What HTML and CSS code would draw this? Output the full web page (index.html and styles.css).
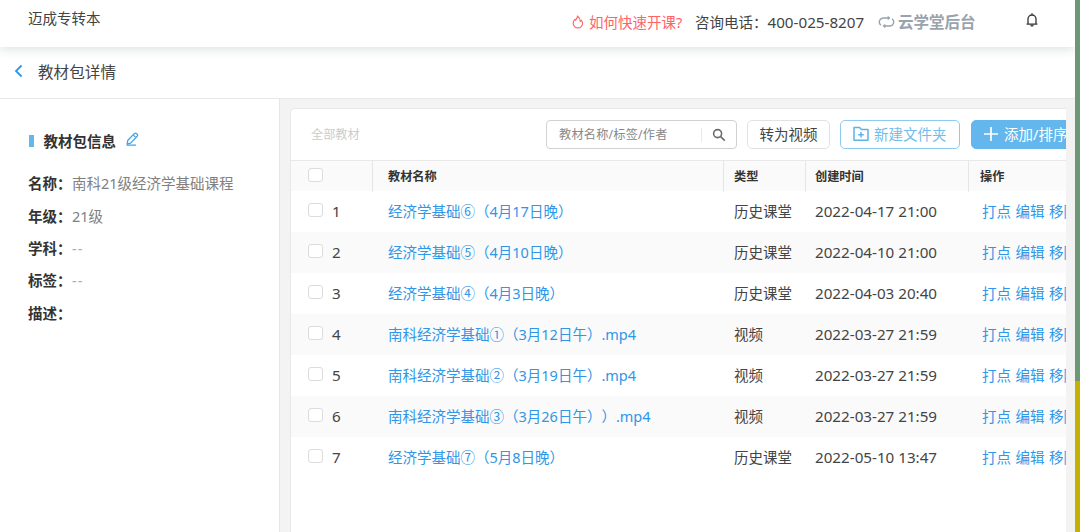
FILE: index.html
```html
<!DOCTYPE html>
<html lang="zh-CN">
<head>
<meta charset="utf-8">
<title>教材包详情</title>
<link rel="stylesheet" href="styles.css">
</head>
<body>
<div class="screen">
  <div class="app">
    <header class="topbar">
      <span class="brand">迈成专转本</span>
      <span class="help">
        <svg class="flame" width="12" height="14" viewBox="0 0 12 14" fill="none" stroke="#ff6464" stroke-width="1.1" stroke-linejoin="round"><path d="M5.4 1C5.6 3.2 4.4 4 3.6 5.2 3.3 4.8 3.2 4.6 3.1 4.2 1.8 5.4 1.2 6.8 1.2 8.2a4.7 4.7 0 0 0 9.4 0C10.6 6.800 9.800 5.800 9.200 5.200 9 5.900 8.700 6.200 8.200 6.500 8.100 4.200 7.200 2.200 5.400 1z"/></svg>
        <span>如何快速开课?</span>
      </span>
      <span class="phone">咨询电话：<span class="num">400-025-8207</span></span>
      <span class="backend">
        <svg width="17" height="14" viewBox="0 0 17 14" fill="none" stroke="#98a3ae" stroke-width="1.4" stroke-linecap="round"><path d="M2.500 9.800A4 4 0 0 1 5 3H10.500M14.500 4.200A4 4 0 0 1 12 11H6.500"/><path d="M9.700 .8L12.500 3 9.700 5.200zM7.300 8.800L4.500 11 7.300 13.200z" fill="#98a3ae" stroke="none"/></svg>
        <span>云学堂后台</span>
      </span>
      <svg class="bell" width="12" height="14" viewBox="0 0 12 14" fill="none" stroke="#333" stroke-width="1.3" stroke-linejoin="round"><path d="M6 .2V2M2 11V6a4 4 0 0 1 8 0v5M.6 11.200H11.400M4.600 12.200Q6 14 7.400 12.200"/></svg>
    </header>
    <div class="crumb">
      <svg width="9" height="14" viewBox="0 0 9 14" fill="none" stroke="#2b96ee" stroke-width="1.8"><path d="M7.600 1.500L2 7l5.600 5.500"/></svg>
      <h1>教材包详情</h1>
    </div>
    <div class="main">
      <aside class="info">
        <h2 class="info-title"><i class="mark"></i><span>教材包信息</span>
          <svg width="13" height="14" viewBox="0 0 13 14" fill="none" stroke="#3ea4ec" stroke-width="1.300" stroke-linejoin="round"><path d="M1.200 11.800L1.700 8.500 8.300 1.600Q9.300.7 10.500 1.600 12.200 2.900 11.200 4.200L4.600 11.100zM7.200 2.900L10 5.600M.6 13.200H10"/></svg>
        </h2>
        <dl class="fields">
          <dt>名称：</dt><dd>南科21级经济学基础课程</dd>
          <dt>年级：</dt><dd>21级</dd>
          <dt>学科：</dt><dd class="none">--</dd>
          <dt>标签：</dt><dd class="none">--</dd>
          <dt>描述：</dt><dd></dd>
        </dl>
      </aside>
      <section class="work">
        <div class="panel">
          <div class="toolbar">
            <span class="all">全部教材</span>
            <div class="search"><span class="hint">教材名称/标签/作者</span><span class="find"><svg width="14" height="14" viewBox="0 0 14 14" fill="none" stroke="#6b6b6b" stroke-width="1.600"><circle cx="5.600" cy="5.600" r="4"/><path d="M8.600 8.600L12.800 12.600"/></svg></span></div>
            <span class="btn convert">转为视频</span>
            <span class="btn folder"><svg width="16" height="16" viewBox="0 0 16 16" fill="none" stroke="#5cb3ea" stroke-width="1.500"><path d="M1 14.200V1.500H6.500L8.500 3.500H15V14.200z" stroke-linejoin="round"/><path d="M8 6V11.600M5.200 8.800H10.800"/></svg><span>新建文件夹</span></span>
            <span class="btn add"><svg width="16" height="16" viewBox="0 0 16 16" stroke="#fff" stroke-width="1.700"><path d="M8 1V15M1 8H15"/></svg><span>添加/排序</span></span>
          </div>
          <div class="row head"><div class="pick"><i class="box"></i></div><div class="name">教材名称</div><div class="type">类型</div><div class="date">创建时间</div><div class="ops">操作</div></div>
          <div class="row"><div class="pick"><i class="box"></i>1</div><div class="name">经济学基础⑥（4月17日晚）</div><div class="type">历史课堂</div><div class="date num">2022-04-17 21:00</div><div class="ops"><a>打点</a><a>编辑</a><a>移除</a></div></div>
          <div class="row"><div class="pick"><i class="box"></i>2</div><div class="name">经济学基础⑤（4月10日晚）</div><div class="type">历史课堂</div><div class="date num">2022-04-10 21:00</div><div class="ops"><a>打点</a><a>编辑</a><a>移除</a></div></div>
          <div class="row"><div class="pick"><i class="box"></i>3</div><div class="name">经济学基础④（4月3日晚）</div><div class="type">历史课堂</div><div class="date num">2022-04-03 20:40</div><div class="ops"><a>打点</a><a>编辑</a><a>移除</a></div></div>
          <div class="row"><div class="pick"><i class="box"></i>4</div><div class="name">南科经济学基础①（3月12日午）.mp4</div><div class="type">视频</div><div class="date num">2022-03-27 21:59</div><div class="ops"><a>打点</a><a>编辑</a><a>移除</a></div></div>
          <div class="row"><div class="pick"><i class="box"></i>5</div><div class="name">南科经济学基础②（3月19日午）.mp4</div><div class="type">视频</div><div class="date num">2022-03-27 21:59</div><div class="ops"><a>打点</a><a>编辑</a><a>移除</a></div></div>
          <div class="row"><div class="pick"><i class="box"></i>6</div><div class="name">南科经济学基础③（3月26日午））.mp4</div><div class="type">视频</div><div class="date num">2022-03-27 21:59</div><div class="ops"><a>打点</a><a>编辑</a><a>移除</a></div></div>
          <div class="row"><div class="pick"><i class="box"></i>7</div><div class="name">经济学基础⑦（5月8日晚）</div><div class="type">历史课堂</div><div class="date num">2022-05-10 13:47</div><div class="ops"><a>打点</a><a>编辑</a><a>移除</a></div></div>
        </div>
      </section>
    </div>
  </div>
  <div class="edge"></div>
</div>
</body>
</html>
```
FILE: styles.css
```css
* { box-sizing: border-box; }
body {
  margin: 0;
  font-family: "Noto Sans", "Noto Sans CJK SC", sans-serif;
  font-size: 14.5px;
  line-height: 20px;
  color: #444;
  text-spacing-trim: space-all;
}
h1, h2, dl, dd { margin: 0; }
svg { flex: none; display: block; }
.screen { display: flex; width: 1080px; height: 532px; overflow: hidden; }
.app { width: 1075px; display: flex; flex-direction: column; background: #fff; overflow: hidden; }
.edge { width: 5px; background: linear-gradient(#6c9876 0 381px, #c6b006 381px); }
.num { font-size: 15.2px; }

.topbar {
  height: 47px;
  flex: none;
  display: flex;
  align-items: center;
  padding: 0 37px 3px 28px;
  background: #fff;
  box-shadow: 0 2px 10px rgba(40, 55, 70, .16);
  z-index: 1;
  white-space: nowrap;
}
.brand { margin-right: auto; padding-bottom: 8px; }
.help { display: flex; align-items: center; width: 123px; gap: 5px; color: #ff6464; }
.phone { width: 183px; }
.backend { display: flex; align-items: center; width: 148px; gap: 3px; font-size: 15.500px; font-weight: 700; color: #98a3ae; }
.bell { margin-bottom: 4px; }

.crumb {
  height: 52px;
  flex: none;
  display: flex;
  align-items: center;
  gap: 15px;
  padding: 0 0 3px 14px;
  border-bottom: 1px solid #e8e8e8;
}
.crumb h1 { font-size: 15.6px; font-weight: 400; padding-top: 2px; }
.main { flex: 1; display: flex; min-height: 0; }
.info { width: 280px; padding: 32px 0 0 28px; border-right: 1px solid #e6e6e6; }
.info-title { display: flex; align-items: center; height: 20px; font-size: 14.5px; color: #333; }
.mark { width: 5px; height: 12px; background: #63b7ec; margin: 0 10px 0 .5px; }
.info-title svg { margin: 0 0 4px 10px; }
.fields { display: grid; grid-template-columns: 44px 1fr; grid-auto-rows: 32.400px; align-items: center; margin-top: 16px; white-space: nowrap; }
.fields dt { font-weight: 700; color: #333; }
.fields dd { color: #808080; }
.fields .none { letter-spacing: 1px; color: #aaa; }

.work { flex: 1; min-width: 0; background: #f3f3f3; padding: 9px 9px 0 10px; }
.panel { width: 776px; height: 100%; background: #fff; border: 1px solid #e8e8e8; border-bottom: 0; border-right: 0; border-radius: 5px 0 0 0; overflow: hidden; white-space: nowrap; }
.toolbar { height: 51px; display: flex; align-items: center; padding-left: 20px; }
.all { width: 235px; flex: none; font-size: 12.200px; color: #ccc; }
.search { width: 191px; height: 29px; flex: none; display: flex; align-items: center; border: 1px solid #d2d2d2; border-radius: 4px; padding-left: 12px; margin-right: 10px; }
.hint { flex: 1; font-size: 12.200px; color: #888; letter-spacing: .2px; padding-top: 1px; }
.find { width: 35px; height: 14px; border-left: 1px solid #e8e8e8; padding-left: 10px; }
.btn { height: 29px; flex: none; display: flex; align-items: center; border: 1px solid #e2e2e2; border-radius: 5px; padding-bottom: 1px; }
.convert { width: 83px; justify-content: center; margin-right: 10px; }
.folder { width: 120px; padding-left: 12px; gap: 5px; border-color: #8ccbf2; color: #72bdeb; margin-right: 11px; }
.add { width: 120px; padding-left: 11px; gap: 5px; background: #63b7ec; border-color: #63b7ec; color: #fff; }

.row { display: grid; grid-template-columns: 82px 351px 82px 163px 1fr; height: 41px; padding-bottom: 2px; align-items: center; }
.row:nth-child(2n + 4) { background: #fafafa; }
.pick { display: flex; align-items: center; gap: 9px; padding-left: 17px; font-size: 15.2px; }
.box { width: 15px; height: 14px; border: 1px solid #dcdcdc; border-radius: 3px; background: #fff; margin-bottom: 2px; }
.name { padding-left: 15px; color: #2f96e8; }
.type { padding-left: 10px; }
.date { padding-left: 9px; }
.ops { display: flex; gap: 4.500px; padding-left: 13px; color: #2f96e8; }
.head { height: 31px; padding-bottom: 0; align-items: stretch; border-top: 1px solid #e8e8e8; background: #fafafa; font-size: 12.200px; line-height: 31px; font-weight: 700; }
.head > div { color: #333; border-right: 1px solid #e6e6e6; }
.head .box { margin-bottom: 4px; }
.head .ops { border-right: 0; padding-left: 11px; }
```
